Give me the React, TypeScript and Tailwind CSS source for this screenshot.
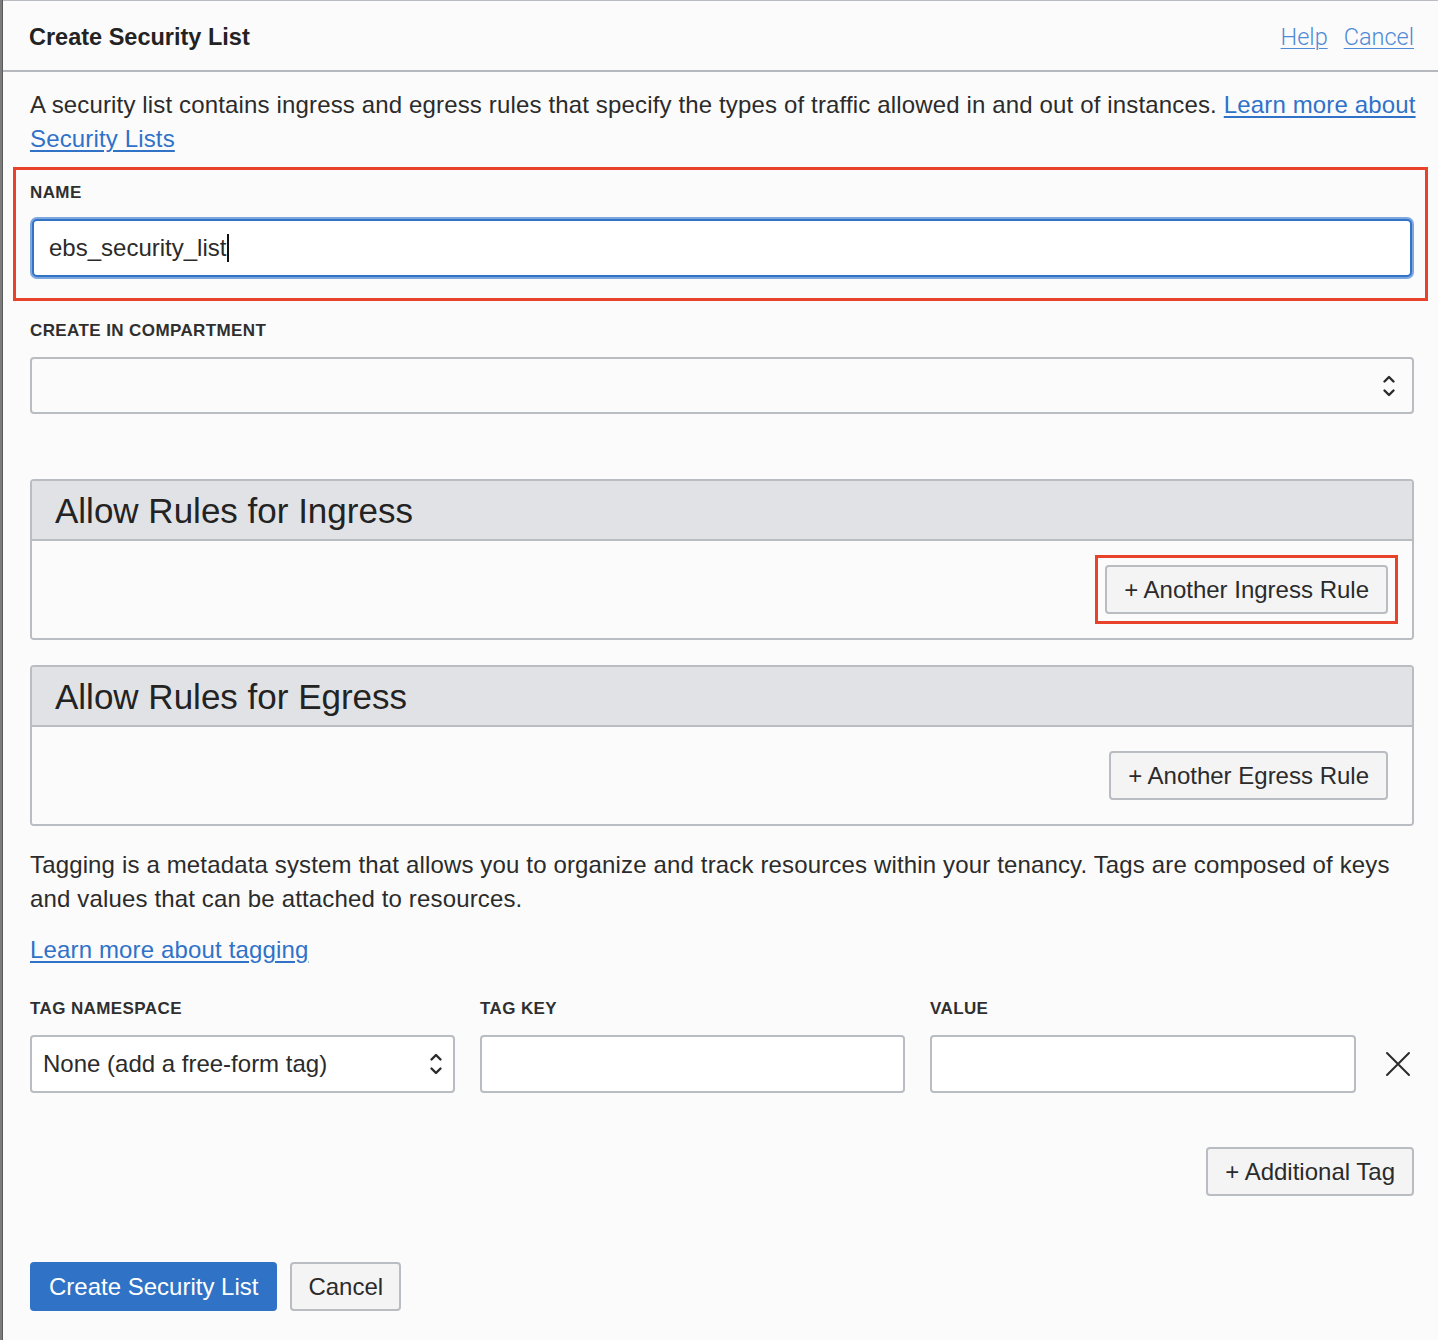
import React from "react";

const font = { fontFamily: '"Liberation Sans", Arial, sans-serif' };

function Chevrons() {
  return (
    <svg width="14" height="26" viewBox="0 0 14 26" fill="none" stroke="#2b2b2b" strokeWidth="2.4" strokeLinecap="round" strokeLinejoin="round">
      <path d="M2.5 8.5 L7 4 L11.5 8.5" />
      <path d="M2.5 17.5 L7 22 L11.5 17.5" />
    </svg>
  );
}

function Label({ children }: { children: React.ReactNode }) {
  return (
    <div className="h-5 mb-4 text-[17px] leading-5 font-bold text-[#2f2f2f] tracking-[0.4px]">{children}</div>
  );
}

function Button({ children, narrow }: { children: React.ReactNode; narrow?: boolean }) {
  return (
    <div
      className={
        narrow
          ? "inline-flex items-center justify-center h-full px-[16px] rounded-[4px] border-2 border-[#b9bdc2] bg-[#f4f4f5] text-[24px] text-[#2b2b2b]"
          : "inline-flex items-center justify-center h-full px-[17px] rounded-[4px] border-2 border-[#b9bdc2] bg-[#f4f4f5] text-[24px] text-[#2b2b2b]"
      }
    >
      {children}
    </div>
  );
}

function RulePanel({ title, button, boxed }: { title: string; button: string; boxed?: boolean }) {
  return (
    <div className="rounded-[4px] border-2 border-[#b9bdc2] overflow-hidden">
      <div className="h-[60px] bg-[#e1e2e6] border-b-2 border-[#b9bdc2] flex items-center pl-[23px]">
        <span className="text-[35px] leading-none text-[#232323]">{title}</span>
      </div>
      <div className="h-[97px] bg-[#fbfbfb] flex items-center justify-end pr-[24px]">
        {boxed ? (
          <div className="border-[3px] border-[#e8432a] p-[7px] -mr-[10px]">
            <div className="h-[49px]">
              <Button>{button}</Button>
            </div>
          </div>
        ) : (
          <div className="h-[49px]">
            <Button>{button}</Button>
          </div>
        )}
      </div>
    </div>
  );
}

export default function App() {
  return (
    <div className="flex w-[1438px] h-[1340px] bg-[#fbfbfb] overflow-hidden" style={font}>
      <div className="w-[3px] shrink-0 bg-[#7c7c7c] border-r border-[#5a5a5a]" />
      <div className="flex-1 flex flex-col border-t border-[#b9bdc2]">
        {/* header */}
        <div className="h-[71px] shrink-0 flex items-center justify-between pl-[26px] pr-[24px] pt-[4px] border-b-2 border-[#b5b9be]">
          <div className="text-[23.5px] font-bold text-[#232323]">Create Security List</div>
          <div className="flex items-center gap-[16px] text-[23.5px] text-[#4f8ad6] font-light" style={{ fontFamily: 'Roboto, "Liberation Sans", sans-serif' }}>
            <span className="underline underline-offset-[3px] decoration-1">Help</span>
            <span className="underline underline-offset-[3px] decoration-1">Cancel</span>
          </div>
        </div>

        <div className="flex flex-col pl-[27px] pr-[24px]">
          <p className="mt-[16px] -mr-[12px] text-[24px] leading-[34px] text-[#2b2b2b] tracking-[0.15px]">
            <span>A security list contains ingress and egress rules that specify the types of traffic allowed in and out of instances.</span>{" "}
            <span className="text-[#2f72c8] underline underline-offset-[3px]">Learn more about</span>{" "}
            <span className="text-[#2f72c8] underline underline-offset-[3px]">Security Lists</span>
          </p>

          {/* red box around name */}
          <div className="mt-[11px] -ml-[17px] -mr-[14px] border-[3px] border-[#e8432a] pl-[14px] pr-[11px] pt-[13px] pb-[21px]">
            <Label>NAME</Label>
            <div className="h-[58px] mx-[2px] rounded-[5px] border-2 border-[#3273c8] bg-white shadow-[0_0_0_2px_#7da8de] flex items-center pl-[15px]">
              <span className="text-[24px] text-[#2b2b2b]">ebs_security_list</span>
              <span className="ml-[1px] w-[2px] h-[28px] bg-[#111]" />
            </div>
          </div>

          <div className="mt-[20px]">
            <Label>CREATE IN COMPARTMENT</Label>
            <div className="h-[57px] rounded-[4px] border-2 border-[#b9bdc2] bg-[#fbfbfb] flex items-center justify-end pr-[16px]">
              <Chevrons />
            </div>
          </div>

          <div className="mt-[65px]">
            <RulePanel title="Allow Rules for Ingress" button="+ Another Ingress Rule" boxed />
          </div>
          <div className="mt-[25px]">
            <RulePanel title="Allow Rules for Egress" button="+ Another Egress Rule" />
          </div>

          <p className="mt-[22px] -mr-[12px] text-[24px] leading-[34px] text-[#2b2b2b] tracking-[0.15px]">
            Tagging is a metadata system that allows you to organize and track resources within your tenancy. Tags are composed of keys and values that can be attached to resources.
          </p>
          <div className="mt-[17px] text-[24px] leading-[34px] tracking-[0.15px]">
            <span className="text-[#2f72c8] underline underline-offset-[3px]">Learn more about tagging</span>
          </div>

          <div className="mt-[32px] flex items-start gap-[25px]">
            <div className="w-[425px]">
              <Label>TAG NAMESPACE</Label>
              <div className="h-[58px] rounded-[4px] border-2 border-[#b9bdc2] bg-white flex items-center justify-between pl-[11px] pr-[10px]">
                <span className="text-[24px] text-[#2b2b2b]">None (add a free-form tag)</span>
                <Chevrons />
              </div>
            </div>
            <div className="w-[425px]">
              <Label>TAG KEY</Label>
              <div className="h-[58px] rounded-[4px] border-2 border-[#b9bdc2] bg-white" />
            </div>
            <div className="w-[426px]">
              <Label>VALUE</Label>
              <div className="h-[58px] rounded-[4px] border-2 border-[#b9bdc2] bg-white" />
            </div>
            <div className="flex-1 h-[58px] mt-[36px] flex items-center justify-center">
              <svg width="26" height="26" viewBox="0 0 26 26" stroke="#2b2b2b" strokeWidth="2" strokeLinecap="round">
                <path d="M2 2 L24 24 M24 2 L2 24" />
              </svg>
            </div>
          </div>

          <div className="mt-[54px] flex justify-end">
            <div className="h-[49px]">
              <Button>+ Additional Tag</Button>
            </div>
          </div>

          <div className="mt-[66px] flex items-center gap-[13px]">
            <div className="h-[49px] px-[19px] rounded-[4px] bg-[#2f72c6] text-white text-[24px] flex items-center">Create Security List</div>
            <div className="h-[49px]">
              <Button narrow>Cancel</Button>
            </div>
          </div>
        </div>
      </div>
    </div>
  );
}
